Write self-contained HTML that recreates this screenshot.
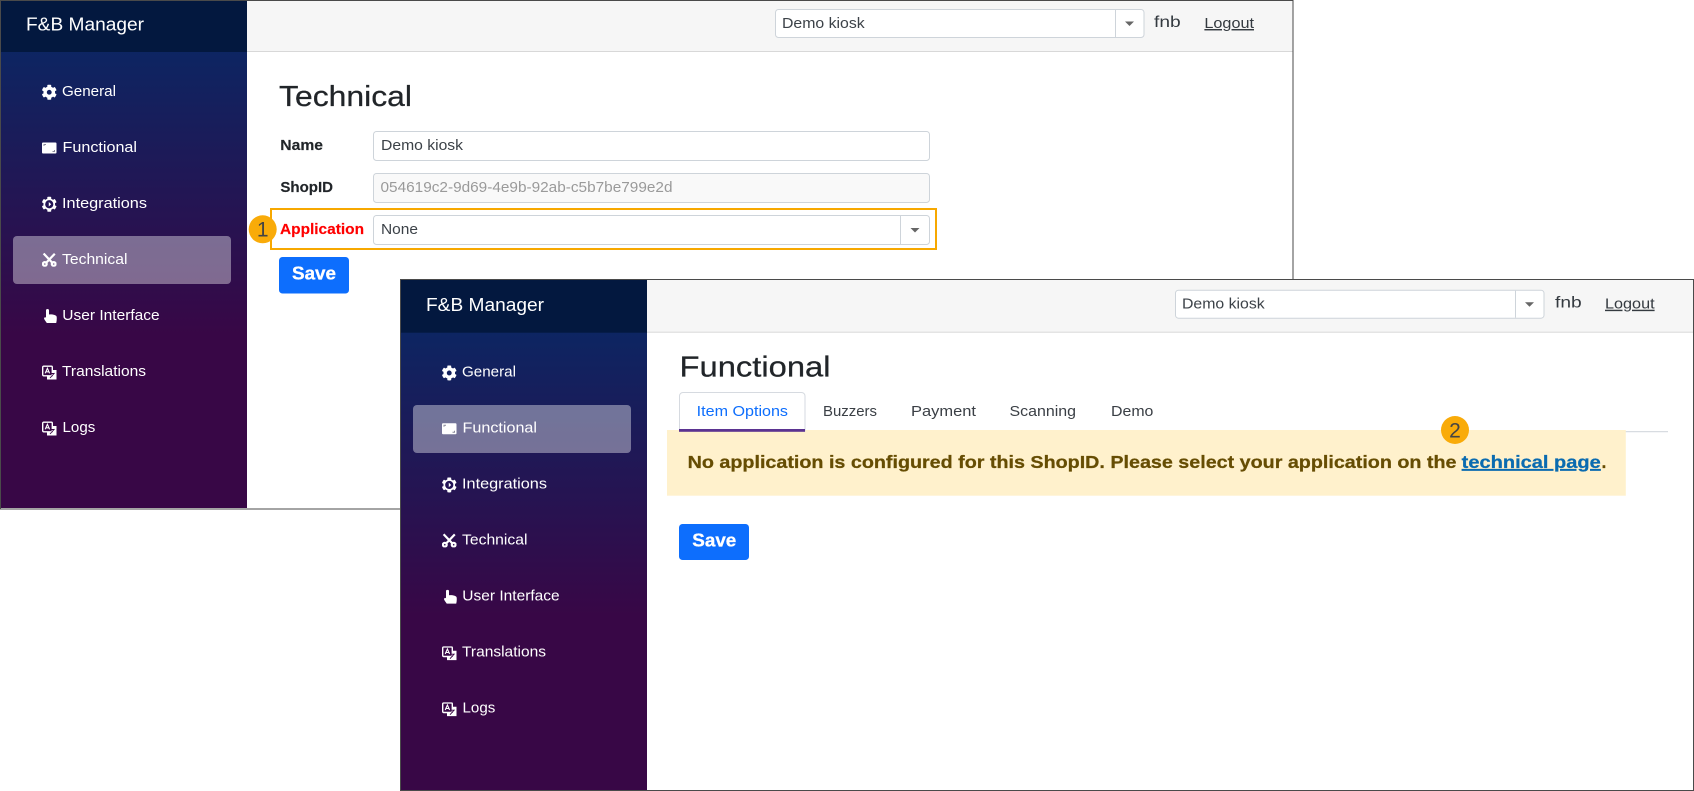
<!DOCTYPE html>
<html lang="en">
<head>
<meta charset="utf-8">
<title>F&amp;B Manager</title>
<style>
html,body{margin:0;padding:0;background:#fff;width:1694px;height:791px;overflow:hidden}
svg{display:block}
text{font-family:"Liberation Sans",sans-serif;white-space:pre}
.nav{font-size:14.5px;fill:#fff}
.brand{font-size:18.5px;fill:#fff}
.title{font-size:29px;fill:#212529;stroke:#212529;stroke-width:.25}
.lab{font-size:14.5px;font-weight:bold;fill:#212529;stroke:#212529;stroke-width:.15}
.val{font-size:14.5px;fill:#3c4248}
.top{font-size:14.5px;fill:#343a40}
.tab{font-size:14.5px;fill:#3a3f45}
.save{font-size:18px;font-weight:bold;fill:#fff;stroke:#fff;stroke-width:.3}
.ban{font-size:17.3px;font-weight:bold;fill:#664d03;stroke:#664d03;stroke-width:.25}
.num{font-size:21px;fill:#444;text-anchor:middle}
</style>
</head>
<body>
<svg xmlns="http://www.w3.org/2000/svg" width="1694" height="791" viewBox="0 0 1694 791">
<defs>
<linearGradient id="g1" gradientUnits="userSpaceOnUse" x1="0" y1="52" x2="0" y2="335">
<stop offset="0" stop-color="#0d2562"/><stop offset="1" stop-color="#380746"/>
</linearGradient>
<linearGradient id="g2" gradientUnits="userSpaceOnUse" x1="0" y1="333" x2="0" y2="616">
<stop offset="0" stop-color="#0d2562"/><stop offset="1" stop-color="#380746"/>
</linearGradient>
</defs>

<!-- Window 1 -->
<rect x="0.5" y="0.5" width="1292.5" height="508.5" fill="#fff" stroke="#4a4a4a"/>
<rect x="1" y="1" width="246" height="507" fill="url(#g1)"/>
<rect x="1" y="1" width="246" height="51" fill="#03183f"/>
<rect x="247" y="1" width="1045.5" height="50.5" fill="#f6f6f6"/>
<rect x="247" y="51" width="1045.5" height="1" fill="#d8d8d8"/>
<text class="brand" x="26" y="30.5" textLength="118" lengthAdjust="spacingAndGlyphs">F&amp;B Manager</text>

<rect x="13" y="236" width="218" height="48" rx="4" fill="#fff" fill-opacity=".39"/>

<svg x="41.500" y="84.500" width="15.500" height="15.500" viewBox="0 0 512 512"><path fill="#fff" d="M487.4 315.7l-42.6-24.6c4.3-23.2 4.3-47 0-70.2l42.6-24.6c4.9-2.8 7.1-8.6 5.5-14-11.1-35.6-30-67.8-54.7-94.6-3.8-4.1-10-5.1-14.8-2.3L380.8 110c-17.9-15.4-38.5-27.3-60.8-35.1V25.8c0-5.6-3.9-10.5-9.4-11.7-36.7-8.2-74.3-7.8-109.2 0-5.5 1.2-9.4 6.1-9.4 11.7V75c-22.2 7.9-42.8 19.8-60.8 35.1L88.7 85.5c-4.9-2.8-11-1.9-14.8 2.3-24.7 26.7-43.6 58.9-54.7 94.6-1.7 5.4.6 11.2 5.5 14L67.3 221c-4.3 23.2-4.3 47 0 70.2l-42.6 24.6c-4.9 2.8-7.1 8.6-5.5 14 11.1 35.6 30 67.8 54.7 94.6 3.8 4.1 10 5.1 14.8 2.3l42.6-24.6c17.9 15.4 38.5 27.3 60.8 35.1v49.2c0 5.6 3.9 10.5 9.4 11.7 36.7 8.2 74.3 7.8 109.2 0 5.5-1.2 9.4-6.1 9.4-11.7v-49.2c22.2-7.9 42.8-19.8 60.8-35.1l42.6 24.6c4.9 2.8 11 1.9 14.8-2.3 24.7-26.7 43.6-58.9 54.7-94.6 1.5-5.5-.7-11.3-5.6-14.1zM256 336c-44.1 0-80-35.9-80-80s35.9-80 80-80 80 35.9 80 80-35.9 80-80 80z"/></svg>
<rect x="42" y="142.500" width="14.500" height="11" rx="1" fill="#fff"/>
<path d="M44 146v-1.500h2M54.500 150v1.500h-2" fill="none" stroke="#8a8a9a" stroke-width="1"/>
<svg x="41.500" y="196.500" width="15.500" height="15.500" viewBox="0 0 512 512"><path fill="#fff" d="M487.4 315.7l-42.6-24.6c4.3-23.2 4.3-47 0-70.2l42.6-24.6c4.9-2.8 7.1-8.6 5.5-14-11.1-35.6-30-67.8-54.7-94.6-3.8-4.1-10-5.1-14.8-2.3L380.8 110c-17.9-15.4-38.5-27.3-60.8-35.1V25.8c0-5.6-3.9-10.5-9.4-11.7-36.7-8.2-74.3-7.8-109.2 0-5.5 1.2-9.4 6.1-9.4 11.7V75c-22.2 7.9-42.8 19.8-60.8 35.1L88.7 85.5c-4.9-2.8-11-1.9-14.8 2.3-24.7 26.7-43.6 58.9-54.7 94.6-1.7 5.4.6 11.2 5.5 14L67.3 221c-4.3 23.2-4.3 47 0 70.2l-42.6 24.6c-4.9 2.8-7.1 8.6-5.5 14 11.1 35.6 30 67.8 54.7 94.6 3.8 4.1 10 5.1 14.8 2.3l42.6-24.6c17.9 15.4 38.5 27.3 60.8 35.1v49.2c0 5.6 3.9 10.5 9.4 11.7 36.7 8.2 74.3 7.8 109.2 0 5.5-1.2 9.4-6.1 9.4-11.7v-49.2c22.2-7.9 42.8-19.8 60.8-35.1l42.6 24.6c4.9 2.8 11 1.9 14.8-2.3 24.7-26.7 43.6-58.9 54.7-94.6 1.5-5.5-.7-11.3-5.6-14.1z"/><circle cx="256" cy="256" r="135" fill="#221355"/><path d="M240 180l80 76-80 76z" fill="#fff"/></svg>
<svg x="42" y="252.700" width="14.500" height="14" viewBox="0 0 14.500 14"><g fill="none" stroke="#fff" stroke-width="2.200"><circle cx="2.800" cy="11.300" r="1.900"/><circle cx="11.700" cy="11.300" r="1.900"/><path d="M4.200 10L12.800 1M10.300 10L1.600 .8"/></g></svg>
<svg x="44" y="309" width="13" height="14" viewBox="0 0 13 14"><path fill="#fff" d="M2 1.500a1.500 1.500 0 0 1 3 0V5.500c3-.3 7.500.3 7.700 2.500.2 2.200 0 4-.5 6H2.800C2 12.500.8 11.500.2 10c-.5-1.300.6-2.300 1.800-1.500z"/></svg>
<svg x="42" y="365.500" width="14.500" height="14" viewBox="0 0 14.500 14"><rect x=".7" y=".7" width="9.600" height="9.600" rx="1" fill="none" stroke="#fff" stroke-width="1.400"/><path d="M3.200 7.800L5.400 2.800 7.600 7.800M4 6.300H6.800" fill="none" stroke="#fff" stroke-width="1.100"/><path fill="#fff" d="M10.800 4.500H14.500V14H5V10.800H10.800z"/><path d="M8 12.500l4.500-5M9 8h3.500" fill="none" stroke="#3a0745" stroke-width=".9"/></svg>
<svg x="42" y="421.500" width="14.500" height="14" viewBox="0 0 14.500 14"><rect x=".7" y=".7" width="9.600" height="9.600" rx="1" fill="none" stroke="#fff" stroke-width="1.400"/><path d="M3.200 7.800L5.400 2.800 7.600 7.800M4 6.300H6.800" fill="none" stroke="#fff" stroke-width="1.100"/><path fill="#fff" d="M10.800 4.500H14.500V14H5V10.800H10.800z"/><path d="M8 12.500l4.500-5M9 8h3.500" fill="none" stroke="#3a0745" stroke-width=".9"/></svg>
<text class="nav" x="62" y="96" textLength="54" lengthAdjust="spacingAndGlyphs">General</text>
<text class="nav" x="62.500" y="152" textLength="74.500" lengthAdjust="spacingAndGlyphs">Functional</text>
<text class="nav" x="62" y="208" textLength="85" lengthAdjust="spacingAndGlyphs">Integrations</text>
<text class="nav" x="62" y="264" textLength="65.500" lengthAdjust="spacingAndGlyphs">Technical</text>
<text class="nav" x="62.300" y="320" textLength="97.400" lengthAdjust="spacingAndGlyphs">User Interface</text>
<text class="nav" x="62" y="376" textLength="84" lengthAdjust="spacingAndGlyphs">Translations</text>
<text class="nav" x="62.500" y="432" textLength="32.800" lengthAdjust="spacingAndGlyphs">Logs</text>

<!-- Window 1 top bar -->
<rect x="775.500" y="9.500" width="368.500" height="28" rx="3" fill="#fff" stroke="#ced4da"/>
<rect x="1115" y="10" width="1" height="27" fill="#ced4da"/>
<polygon points="1125,21.500 1134,21.500 1129.500,26" fill="#666"/>
<text class="val" x="782" y="28" textLength="82.700" lengthAdjust="spacingAndGlyphs">Demo kiosk</text>
<text class="top" x="1154" y="27" textLength="26.700" lengthAdjust="spacingAndGlyphs" style="font-size:15.500px">fnb</text>
<text class="top" x="1204.400" y="28" textLength="49.600" lengthAdjust="spacingAndGlyphs" text-decoration="underline">Logout</text>

<!-- Window 1 content -->
<text class="title" x="279" y="106" textLength="133" lengthAdjust="spacingAndGlyphs">Technical</text>
<text class="lab" x="280.300" y="150" textLength="42.700" lengthAdjust="spacingAndGlyphs">Name</text>
<rect x="373.500" y="131.500" width="556" height="29" rx="3" fill="#fff" stroke="#ced4da"/>
<text class="val" x="381" y="150" textLength="82" lengthAdjust="spacingAndGlyphs">Demo kiosk</text>
<text class="lab" x="280.400" y="192" textLength="52.600" lengthAdjust="spacingAndGlyphs">ShopID</text>
<rect x="373.500" y="173.500" width="556" height="29" rx="3" fill="#f9f9f9" stroke="#ced4da"/>
<text class="val" x="380.500" y="192" textLength="292" lengthAdjust="spacingAndGlyphs" style="fill:#9a9a9a">054619c2-9d69-4e9b-92ab-c5b7be799e2d</text>
<rect x="271" y="209" width="665" height="40" fill="none" stroke="#f7a800" stroke-width="2"/>
<rect x="373.500" y="215.500" width="556" height="29" rx="3" fill="#fff" stroke="#ced4da"/>
<rect x="900" y="216" width="1" height="28" fill="#ced4da"/>
<polygon points="910.500,228 919.500,228 915,232.500" fill="#666"/>
<text class="lab" x="280" y="234" textLength="84" lengthAdjust="spacingAndGlyphs" style="fill:#f00;stroke:#f00">Application</text>
<text class="val" x="381" y="234" textLength="37" lengthAdjust="spacingAndGlyphs">None</text>
<circle cx="262.700" cy="229.300" r="14" fill="#f9ab09"/>
<text class="num" x="262.700" y="236.500">1</text>
<rect x="279" y="257" width="70" height="36.500" rx="3.500" fill="#0d6efd"/>
<text class="save" x="292" y="279.500" textLength="44" lengthAdjust="spacingAndGlyphs">Save</text>

<!-- Window 2 -->
<rect x="400.500" y="279.500" width="1293" height="511" fill="#fff" stroke="#4a4a4a"/>
<rect x="401" y="280" width="246" height="510" fill="url(#g2)"/>
<rect x="401" y="280" width="246" height="52.700" fill="#03183f"/>
<rect x="647" y="280" width="1046" height="52" fill="#f6f6f6"/>
<rect x="647" y="331.700" width="1046" height="1" fill="#d8d8d8"/>

<g transform="translate(400 280.700)">
<text class="brand" x="26" y="30.500" textLength="118" lengthAdjust="spacingAndGlyphs">F&amp;B Manager</text>
<rect x="13" y="124.300" width="218" height="48" rx="4" fill="#fff" fill-opacity=".39"/>
<svg x="41.500" y="84.500" width="15.500" height="15.500" viewBox="0 0 512 512"><path fill="#fff" d="M487.4 315.7l-42.6-24.6c4.3-23.2 4.3-47 0-70.2l42.6-24.6c4.9-2.8 7.1-8.6 5.5-14-11.1-35.6-30-67.8-54.7-94.6-3.8-4.1-10-5.1-14.8-2.3L380.8 110c-17.9-15.4-38.5-27.3-60.8-35.1V25.8c0-5.6-3.9-10.5-9.4-11.7-36.7-8.2-74.3-7.8-109.2 0-5.5 1.2-9.4 6.1-9.4 11.7V75c-22.2 7.9-42.8 19.8-60.8 35.1L88.7 85.5c-4.9-2.8-11-1.9-14.8 2.3-24.7 26.7-43.6 58.9-54.7 94.6-1.7 5.4.6 11.2 5.5 14L67.3 221c-4.3 23.2-4.3 47 0 70.2l-42.6 24.6c-4.9 2.8-7.1 8.6-5.5 14 11.1 35.6 30 67.8 54.7 94.6 3.8 4.1 10 5.1 14.8 2.3l42.6-24.6c17.9 15.4 38.5 27.3 60.8 35.1v49.2c0 5.6 3.9 10.5 9.4 11.7 36.7 8.2 74.3 7.8 109.2 0 5.5-1.2 9.4-6.1 9.4-11.7v-49.2c22.2-7.9 42.8-19.8 60.8-35.1l42.6 24.6c4.9 2.8 11 1.9 14.8-2.3 24.7-26.7 43.6-58.9 54.7-94.6 1.5-5.5-.7-11.3-5.6-14.1zM256 336c-44.1 0-80-35.9-80-80s35.9-80 80-80 80 35.9 80 80-35.9 80-80 80z"/></svg>
<rect x="42" y="142.500" width="14.500" height="11" rx="1" fill="#fff"/>
<path d="M44 146v-1.500h2M54.500 150v1.500h-2" fill="none" stroke="#8a8a9a" stroke-width="1"/>
<svg x="41.500" y="196.500" width="15.500" height="15.500" viewBox="0 0 512 512"><path fill="#fff" d="M487.4 315.7l-42.6-24.6c4.3-23.2 4.3-47 0-70.2l42.6-24.6c4.9-2.8 7.1-8.6 5.5-14-11.1-35.6-30-67.8-54.7-94.6-3.8-4.1-10-5.1-14.8-2.3L380.8 110c-17.9-15.4-38.5-27.3-60.8-35.1V25.8c0-5.6-3.9-10.5-9.4-11.7-36.7-8.2-74.3-7.8-109.2 0-5.5 1.2-9.4 6.1-9.4 11.7V75c-22.2 7.9-42.8 19.8-60.8 35.1L88.7 85.5c-4.9-2.8-11-1.9-14.8 2.3-24.7 26.7-43.6 58.9-54.7 94.6-1.7 5.4.6 11.2 5.5 14L67.3 221c-4.3 23.2-4.3 47 0 70.2l-42.6 24.6c-4.9 2.8-7.1 8.6-5.5 14 11.1 35.6 30 67.8 54.7 94.6 3.8 4.1 10 5.1 14.8 2.3l42.6-24.6c17.9 15.4 38.5 27.3 60.8 35.1v49.2c0 5.6 3.9 10.5 9.4 11.7 36.7 8.2 74.3 7.8 109.2 0 5.5-1.2 9.4-6.1 9.4-11.7v-49.2c22.2-7.9 42.8-19.8 60.8-35.1l42.6 24.6c4.9 2.8 11 1.9 14.8-2.3 24.7-26.7 43.6-58.9 54.7-94.6 1.5-5.5-.7-11.3-5.6-14.1z"/><circle cx="256" cy="256" r="135" fill="#221355"/><path d="M240 180l80 76-80 76z" fill="#fff"/></svg>
<svg x="42" y="252.700" width="14.500" height="14" viewBox="0 0 14.500 14"><g fill="none" stroke="#fff" stroke-width="2.200"><circle cx="2.800" cy="11.300" r="1.900"/><circle cx="11.700" cy="11.300" r="1.900"/><path d="M4.200 10L12.800 1M10.300 10L1.600 .8"/></g></svg>
<svg x="44" y="309" width="13" height="14" viewBox="0 0 13 14"><path fill="#fff" d="M2 1.500a1.500 1.500 0 0 1 3 0V5.500c3-.3 7.500.3 7.700 2.500.2 2.200 0 4-.5 6H2.800C2 12.500.8 11.500.2 10c-.5-1.300.6-2.300 1.800-1.500z"/></svg>
<svg x="42" y="365.500" width="14.500" height="14" viewBox="0 0 14.500 14"><rect x=".7" y=".7" width="9.600" height="9.600" rx="1" fill="none" stroke="#fff" stroke-width="1.400"/><path d="M3.200 7.800L5.400 2.800 7.600 7.800M4 6.300H6.800" fill="none" stroke="#fff" stroke-width="1.100"/><path fill="#fff" d="M10.800 4.500H14.500V14H5V10.800H10.800z"/><path d="M8 12.500l4.500-5M9 8h3.500" fill="none" stroke="#3a0745" stroke-width=".9"/></svg>
<svg x="42" y="421.500" width="14.500" height="14" viewBox="0 0 14.500 14"><rect x=".7" y=".7" width="9.600" height="9.600" rx="1" fill="none" stroke="#fff" stroke-width="1.400"/><path d="M3.200 7.800L5.400 2.800 7.600 7.800M4 6.300H6.800" fill="none" stroke="#fff" stroke-width="1.100"/><path fill="#fff" d="M10.800 4.500H14.500V14H5V10.800H10.800z"/><path d="M8 12.500l4.500-5M9 8h3.500" fill="none" stroke="#3a0745" stroke-width=".9"/></svg>
<text class="nav" x="62" y="96" textLength="54" lengthAdjust="spacingAndGlyphs">General</text>
<text class="nav" x="62.500" y="152" textLength="74.500" lengthAdjust="spacingAndGlyphs">Functional</text>
<text class="nav" x="62" y="208" textLength="85" lengthAdjust="spacingAndGlyphs">Integrations</text>
<text class="nav" x="62" y="264" textLength="65.500" lengthAdjust="spacingAndGlyphs">Technical</text>
<text class="nav" x="62.300" y="320" textLength="97.400" lengthAdjust="spacingAndGlyphs">User Interface</text>
<text class="nav" x="62" y="376" textLength="84" lengthAdjust="spacingAndGlyphs">Translations</text>
<text class="nav" x="62.500" y="432" textLength="32.800" lengthAdjust="spacingAndGlyphs">Logs</text>
<rect x="775.500" y="9.500" width="368.500" height="28" rx="3" fill="#fff" stroke="#ced4da"/>
<rect x="1115" y="10" width="1" height="27" fill="#ced4da"/>
<polygon points="1125,21.500 1134,21.500 1129.500,26" fill="#666"/>
<text class="val" x="782" y="28" textLength="82.700" lengthAdjust="spacingAndGlyphs">Demo kiosk</text>
<text class="top" x="1155" y="27" textLength="26.700" lengthAdjust="spacingAndGlyphs" style="font-size:15.500px">fnb</text>
<text class="top" x="1205" y="28" textLength="49.600" lengthAdjust="spacingAndGlyphs" text-decoration="underline">Logout</text>
</g>

<!-- Window 2 content -->
<text class="title" x="679.500" y="376.700" textLength="151" lengthAdjust="spacingAndGlyphs">Functional</text>
<rect x="667" y="431.200" width="1001" height="1" fill="#ced4da"/>
<rect x="667" y="430" width="958.800" height="65.700" fill="#fff1cc"/>
<path d="M679.500 431V396a3.500 3.500 0 0 1 3.500-3.500H801.500a3.500 3.500 0 0 1 3.500 3.500V431z" fill="#fff" stroke="#d6dae0"/>
<rect x="679" y="429" width="126" height="2.800" fill="#5b3391"/>
<text class="tab" x="696.700" y="416" textLength="91.300" lengthAdjust="spacingAndGlyphs" style="fill:#0d6efd">Item Options</text>
<text class="tab" x="823" y="416" textLength="54" lengthAdjust="spacingAndGlyphs">Buzzers</text>
<text class="tab" x="911" y="416" textLength="65" lengthAdjust="spacingAndGlyphs">Payment</text>
<text class="tab" x="1009.500" y="416" textLength="66.500" lengthAdjust="spacingAndGlyphs">Scanning</text>
<text class="tab" x="1111" y="416" textLength="42.400" lengthAdjust="spacingAndGlyphs">Demo</text>
<text class="ban" x="687.700" y="468" textLength="768.800" lengthAdjust="spacingAndGlyphs">No application is configured for this ShopID. Please select your application on the</text>
<text class="ban" x="1461.700" y="468" textLength="139.100" lengthAdjust="spacingAndGlyphs" text-decoration="underline" style="fill:#0a6bb0;stroke:#0a6bb0">technical page</text>
<text class="ban" x="1601.500" y="468">.</text>
<circle cx="1455" cy="430" r="14" fill="#f9ab09"/>
<text class="num" x="1455" y="437.300">2</text>
<rect x="679" y="524" width="70" height="36" rx="3.500" fill="#0d6efd"/>
<text class="save" x="692.300" y="546.700" textLength="44" lengthAdjust="spacingAndGlyphs">Save</text>
</svg>
</body>
</html>
